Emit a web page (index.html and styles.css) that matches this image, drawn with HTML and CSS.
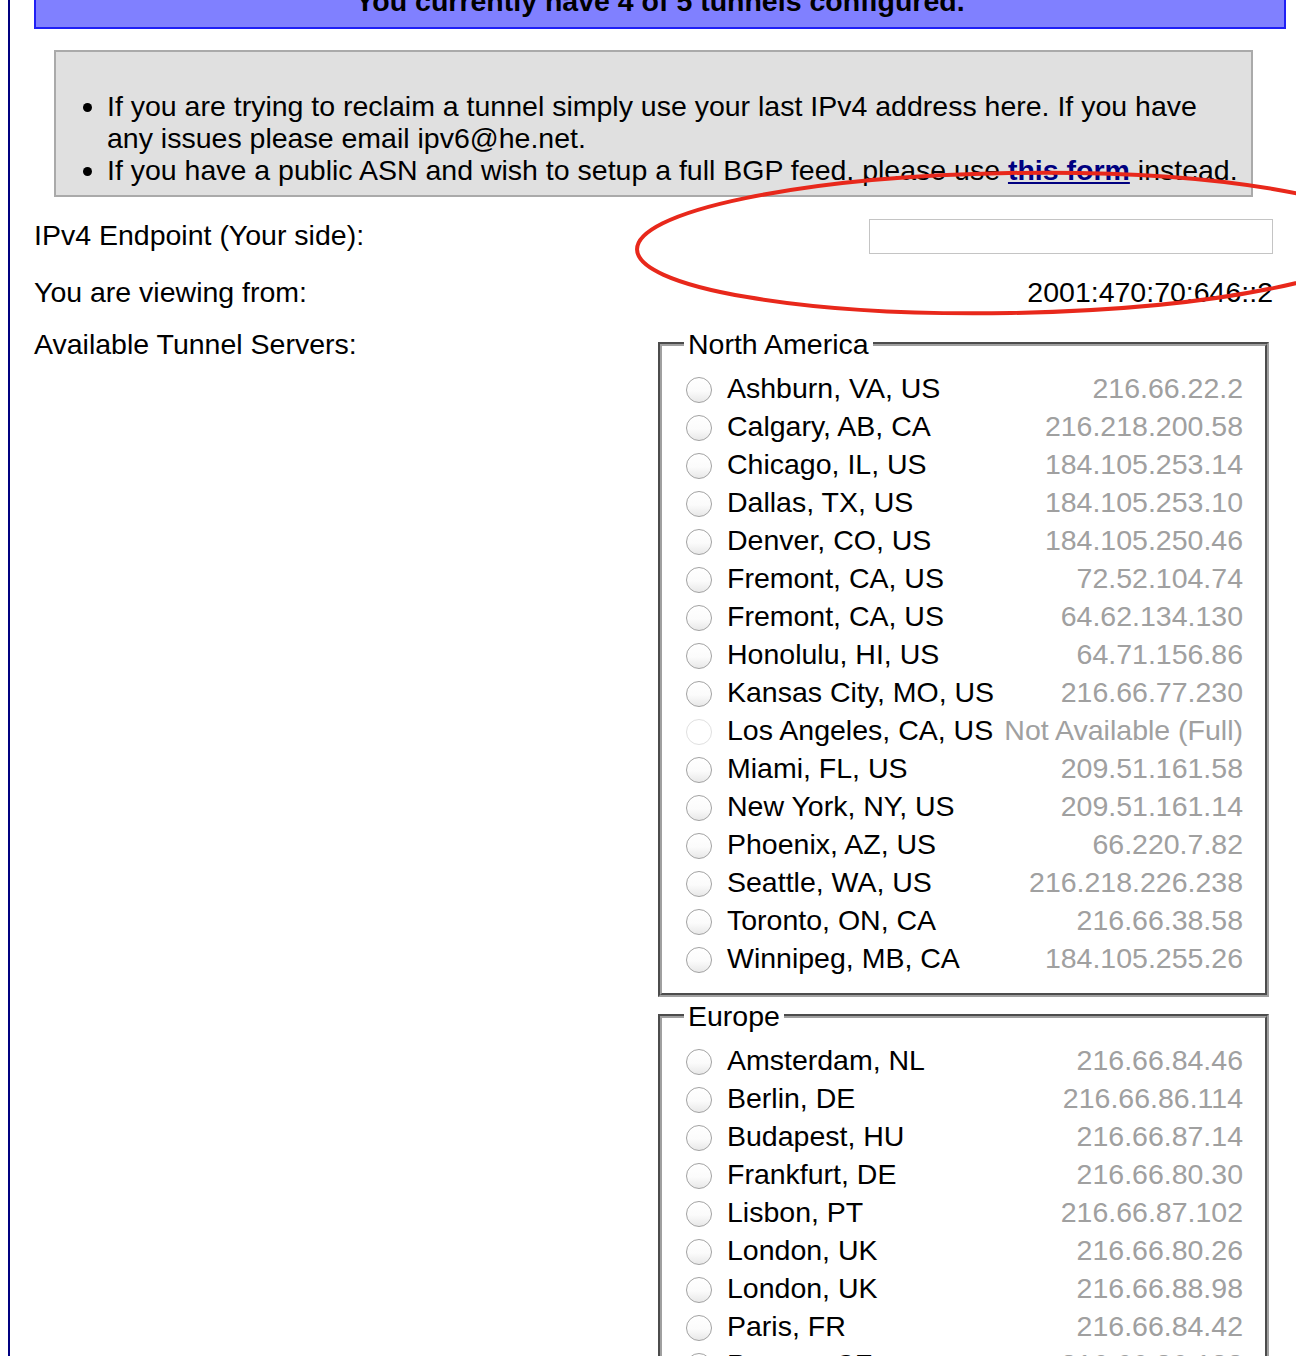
FILE: index.html
```html
<!DOCTYPE html>
<html>
<head>
<meta charset="utf-8">
<title>Create Regular Tunnel</title>
<link rel="stylesheet" href="styles.css">
</head>
<body>
<div class="page">
  <div class="banner">You currently have 4 of 5 tunnels configured.</div>

  <div class="notice">
    <ul>
      <li>If you are trying to reclaim a tunnel simply use your last IPv4 address here. If you have<br>any issues please email ipv6@he.net.</li>
      <li>If you have a public ASN and wish to setup a full BGP feed, please use <a class="notice-link" href="#">this form</a> instead.</li>
    </ul>
  </div>

  <div class="row row-endpoint">
    <label class="row-label" for="ipv4">IPv4 Endpoint (Your side):</label>
    <input class="ip-input" id="ipv4" type="text">
  </div>

  <div class="row row-view">
    <span class="row-label">You are viewing from:</span>
    <span class="row-value">2001:470:70:646::2</span>
  </div>

  <div class="servers">
    <div class="row-label">Available Tunnel Servers:</div>
    <div class="regions">
      <fieldset class="region">
        <legend class="region-name">North America</legend>
        <div class="server"><input class="radio" type="radio" name="tserv"><span class="city">Ashburn, VA, US</span><span class="addr">216.66.22.2</span></div>
        <div class="server"><input class="radio" type="radio" name="tserv"><span class="city">Calgary, AB, CA</span><span class="addr">216.218.200.58</span></div>
        <div class="server"><input class="radio" type="radio" name="tserv"><span class="city">Chicago, IL, US</span><span class="addr">184.105.253.14</span></div>
        <div class="server"><input class="radio" type="radio" name="tserv"><span class="city">Dallas, TX, US</span><span class="addr">184.105.253.10</span></div>
        <div class="server"><input class="radio" type="radio" name="tserv"><span class="city">Denver, CO, US</span><span class="addr">184.105.250.46</span></div>
        <div class="server"><input class="radio" type="radio" name="tserv"><span class="city">Fremont, CA, US</span><span class="addr">72.52.104.74</span></div>
        <div class="server"><input class="radio" type="radio" name="tserv"><span class="city">Fremont, CA, US</span><span class="addr">64.62.134.130</span></div>
        <div class="server"><input class="radio" type="radio" name="tserv"><span class="city">Honolulu, HI, US</span><span class="addr">64.71.156.86</span></div>
        <div class="server"><input class="radio" type="radio" name="tserv"><span class="city">Kansas City, MO, US</span><span class="addr">216.66.77.230</span></div>
        <div class="server"><input class="radio" type="radio" name="tserv" disabled><span class="city">Los Angeles, CA, US</span><span class="addr">Not Available (Full)</span></div>
        <div class="server"><input class="radio" type="radio" name="tserv"><span class="city">Miami, FL, US</span><span class="addr">209.51.161.58</span></div>
        <div class="server"><input class="radio" type="radio" name="tserv"><span class="city">New York, NY, US</span><span class="addr">209.51.161.14</span></div>
        <div class="server"><input class="radio" type="radio" name="tserv"><span class="city">Phoenix, AZ, US</span><span class="addr">66.220.7.82</span></div>
        <div class="server"><input class="radio" type="radio" name="tserv"><span class="city">Seattle, WA, US</span><span class="addr">216.218.226.238</span></div>
        <div class="server"><input class="radio" type="radio" name="tserv"><span class="city">Toronto, ON, CA</span><span class="addr">216.66.38.58</span></div>
        <div class="server"><input class="radio" type="radio" name="tserv"><span class="city">Winnipeg, MB, CA</span><span class="addr">184.105.255.26</span></div>
      </fieldset>

      <fieldset class="region region-next">
        <legend class="region-name">Europe</legend>
        <div class="server"><input class="radio" type="radio" name="tserv"><span class="city">Amsterdam, NL</span><span class="addr">216.66.84.46</span></div>
        <div class="server"><input class="radio" type="radio" name="tserv"><span class="city">Berlin, DE</span><span class="addr">216.66.86.114</span></div>
        <div class="server"><input class="radio" type="radio" name="tserv"><span class="city">Budapest, HU</span><span class="addr">216.66.87.14</span></div>
        <div class="server"><input class="radio" type="radio" name="tserv"><span class="city">Frankfurt, DE</span><span class="addr">216.66.80.30</span></div>
        <div class="server"><input class="radio" type="radio" name="tserv"><span class="city">Lisbon, PT</span><span class="addr">216.66.87.102</span></div>
        <div class="server"><input class="radio" type="radio" name="tserv"><span class="city">London, UK</span><span class="addr">216.66.80.26</span></div>
        <div class="server"><input class="radio" type="radio" name="tserv"><span class="city">London, UK</span><span class="addr">216.66.88.98</span></div>
        <div class="server"><input class="radio" type="radio" name="tserv"><span class="city">Paris, FR</span><span class="addr">216.66.84.42</span></div>
        <div class="server"><input class="radio" type="radio" name="tserv"><span class="city">Prague, CZ</span><span class="addr">216.66.86.122</span></div>
        <div class="server"><input class="radio" type="radio" name="tserv"><span class="city">Stockholm, SE</span><span class="addr">216.66.80.90</span></div>
        <div class="server"><input class="radio" type="radio" name="tserv"><span class="city">Warsaw, PL</span><span class="addr">216.66.80.162</span></div>
        <div class="server"><input class="radio" type="radio" name="tserv"><span class="city">Zurich, CH</span><span class="addr">216.66.80.98</span></div>
      </fieldset>
    </div>
  </div>
</div>

<svg class="annotation" width="1296" height="400" viewBox="0 0 1296 400" aria-hidden="true">
  <ellipse cx="1010" cy="243" rx="373" ry="70" transform="rotate(-1 1010 243)" fill="none" stroke="#e8281b" stroke-width="4"/>
</svg>
</body>
</html>
```

FILE: styles.css
```css
html, body {
  margin: 0;
  padding: 0;
  background: #ffffff;
}

body {
  position: relative;
  font-family: "Liberation Sans", Arial, Helvetica, sans-serif;
  font-size: 28.5px;
  line-height: 32px;
  color: #000000;
  overflow: hidden;
  height: 1356px;
}

.page {
  display: flow-root;
  margin-left: 8px;
  border-left: 2px solid #000080;
  padding: 0 10px 0 24px;
  min-height: 1400px;
}

.banner {
  margin-top: -27px;
  padding: 10px;
  border: 2px solid #1f1ff5;
  background: #8080ff;
  text-align: center;
  font-weight: bold;
}

.notice {
  margin: 21px 33px 0 20px;
  padding: 38px 0 9px 0;
  border: 2px solid #aaaaaa;
  background: #e0e0e0;
}

.notice ul {
  margin: 0;
  padding: 0 0 0 51px;
  white-space: nowrap;
}

.notice-link {
  color: #000080;
  font-weight: bold;
  text-decoration: underline;
}

.row {
  display: flex;
  align-items: center;
  justify-content: space-between;
  margin-right: 13px;
}

.row-endpoint {
  margin-top: 22px;
  height: 35px;
}

.row-endpoint .row-label {
  margin-top: -4px;
}

.row-view {
  margin-top: 22px;
}

.ip-input {
  box-sizing: border-box;
  width: 404px;
  height: 35px;
  margin: 0;
  border: 1px solid #c4c4c4;
  background: #ffffff;
  font: inherit;
}

.servers {
  display: flex;
  justify-content: space-between;
  align-items: flex-start;
  margin-top: 20px;
  margin-right: 17px;
}

.regions {
  width: 611px;
}

.region {
  margin: 0;
  padding: 9px 22px 16px;
  border: 4px groove #a0a0a0;
  min-width: 0;
}

.region-next {
  margin-top: 3px;
}

.region-name {
  padding: 0 4px;
  font-size: 28.5px;
  line-height: 32px;
}

.server {
  display: flex;
  align-items: center;
  height: 38px;
  padding-left: 2px;
  white-space: nowrap;
}

.radio {
  -webkit-appearance: none;
  appearance: none;
  box-sizing: border-box;
  flex: none;
  width: 26px;
  height: 26px;
  margin: 3px 15px 0 0;
  border: 1px solid #a2a2a2;
  border-radius: 50%;
  background: linear-gradient(#ffffff 0%, #fbfbfb 55%, #e8e8e8 100%);
  box-shadow: inset 0 1px 1px rgba(255, 255, 255, 0.9);
}

.radio:disabled {
  border-color: #e0e0e0;
  background: #ffffff;
}

.addr {
  margin-left: auto;
  color: #a0a0a0;
}

.annotation {
  position: absolute;
  top: 0;
  left: 0;
  pointer-events: none;
}
```
